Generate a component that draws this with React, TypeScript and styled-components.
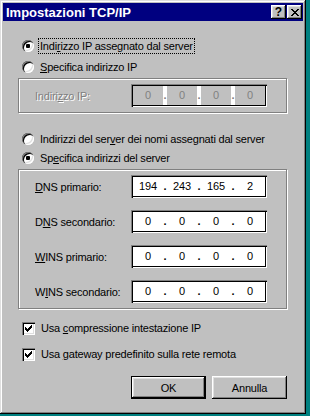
import React from 'react'
import styled, { createGlobalStyle } from 'styled-components'

const GlobalStyle = createGlobalStyle`
  body {
    margin: 0;
    background: #008080;
    font-family: "Liberation Sans", Arial, sans-serif;
    font-size: 11px;
    letter-spacing: -0.2px;
    color: #000;
  }
`

const Window = styled.div`
  width: 306px;
  height: 414px;
  box-sizing: border-box;
  padding: 3px;
  background: #c0c0c0;
  box-shadow: inset -1px -1px #000, inset 1px 1px #dfdfdf,
    inset -2px -2px #808080, inset 2px 2px #fff;
  display: flex;
  flex-direction: column;
`

const TitleBar = styled.div`
  height: 18px;
  background: #000080;
  display: flex;
  align-items: center;
  padding: 0 1px 0 3px;
  color: #fff;
  font-weight: bold;
  font-size: 13px;
  letter-spacing: 0;
`

const TitleButtons = styled.div`
  margin-left: auto;
  display: flex;
  gap: 1px;
`

const TitleButton = styled.div`
  width: 15px;
  height: 14px;
  box-sizing: border-box;
  background: #c0c0c0;
  color: #000;
  display: flex;
  align-items: center;
  justify-content: center;
  font-size: 12px;
  font-weight: bold;
  box-shadow: inset -1px -1px #000, inset 1px 1px #fff,
    inset -2px -2px #808080, inset 2px 2px #dfdfdf;
`

const Body = styled.div`
  display: flex;
  flex-direction: column;
  padding: 17px 16px 0 15px;
`

const OptionRow = styled.label<{ $top: number }>`
  display: flex;
  align-items: center;
  height: 16px;
  margin-top: ${p => p.$top}px;
  padding-left: 4px;
  gap: 5px;
`

const Radio = styled.span<{ $checked?: boolean }>`
  position: relative;
  width: 12px;
  height: 12px;
  flex: none;
  border-radius: 50%;
  background: #fff;
  box-shadow: inset 1px 1px 0 #808080, inset 2px 2px 0 #000,
    inset -1px -1px 0 #fff, inset -2px -2px 0 #dfdfdf;
  &::after {
    content: '';
    display: ${p => (p.$checked ? 'block' : 'none')};
    position: absolute;
    left: 4px;
    top: 4px;
    width: 4px;
    height: 4px;
    border-radius: 1px;
    background: #000;
  }
`

const Check = styled.span`
  width: 13px;
  height: 13px;
  flex: none;
  background: #fff;
  box-shadow: inset 1px 1px 0 #808080, inset 2px 2px 0 #000,
    inset -1px -1px 0 #fff, inset -2px -2px 0 #dfdfdf;
  display: flex;
  align-items: center;
  justify-content: center;
`

const Caption = styled.span<{ $focused?: boolean }>`
  padding: 1px 1px;
  outline: ${p => (p.$focused ? '1px dotted #000' : 'none')};
  white-space: nowrap;
`

const Group = styled.div<{ $top: number }>`
  margin-top: ${p => p.$top}px;
  border: 1px solid #808080;
  box-shadow: 1px 1px 0 #fff, inset 1px 1px 0 #fff;
  display: flex;
  flex-direction: column;
  gap: 12px;
  padding: 5px 0 5px 16px;
`

const FieldRow = styled.div`
  display: flex;
  align-items: center;
`

const FieldLabel = styled.span<{ $disabled?: boolean }>`
  width: 96px;
  flex: none;
  color: ${p => (p.$disabled ? '#808080' : '#000')};
  text-shadow: ${p => (p.$disabled ? '1px 1px 0 #fff' : 'none')};
`

const IpBox = styled.div`
  width: 136px;
  height: 23px;
  box-sizing: border-box;
  padding: 2px;
  background: #fff;
  box-shadow: inset 1px 1px 0 #808080, inset 2px 2px 0 #000,
    inset -1px -1px 0 #fff, inset -2px -2px 0 #000;
  display: flex;
`

const Octet = styled.span<{ $disabled?: boolean }>`
  width: 30px;
  flex: none;
  display: flex;
  align-items: center;
  justify-content: center;
  padding-bottom: 2px;
  box-sizing: border-box;
  background: ${p => (p.$disabled ? '#c0c0c0' : '#fff')};
  color: ${p => (p.$disabled ? '#808080' : '#000')};
`

const Dot = styled.span<{ $disabled?: boolean }>`
  width: 4px;
  flex: none;
  display: flex;
  align-items: center;
  justify-content: center;
  padding-bottom: 2px;
  font-weight: bold;
  color: ${p => (p.$disabled ? '#808080' : '#000')};
`

const Footer = styled.div`
  display: flex;
  justify-content: flex-end;
  gap: 6px;
  margin-top: 14px;
`

const Button = styled.div<{ $default?: boolean }>`
  width: 75px;
  height: 23px;
  box-sizing: border-box;
  background: #c0c0c0;
  display: flex;
  align-items: center;
  justify-content: center;
  border: ${p => (p.$default ? '1px solid #000' : 'none')};
  box-shadow: inset -1px -1px #000, inset 1px 1px #fff,
    inset -2px -2px #808080, inset 2px 2px #dfdfdf;
`

const CheckMark = () => (
  <svg width="7" height="7" viewBox="0 0 7 7" shapeRendering="crispEdges">
    <path
      d="M0 2h1v3h-1zM1 3h1v3h-1zM2 4h1v3h-1zM3 3h1v3h-1zM4 2h1v3h-1zM5 1h1v3h-1zM6 0h1v3h-1z"
      fill="#000"
    />
  </svg>
)

const CloseGlyph = () => (
  <svg width="8" height="7" viewBox="0 0 8 7" shapeRendering="crispEdges">
    <path
      d="M0 0h2v1h-2zM6 0h2v1h-2zM1 1h2v1h-2zM5 1h2v1h-2zM2 2h4v1h-4zM3 3h2v1h-2zM2 4h4v1h-4zM1 5h2v1h-2zM5 5h2v1h-2zM0 6h2v1h-2zM6 6h2v1h-2z"
      fill="#000"
    />
  </svg>
)

const IpField: React.FC<{ value: string[]; disabled?: boolean }> = ({ value, disabled }) => (
  <IpBox>
    {value.map((v, i) => (
      <React.Fragment key={i}>
        {i > 0 && <Dot $disabled={disabled}>.</Dot>}
        <Octet $disabled={disabled}>{v}</Octet>
      </React.Fragment>
    ))}
  </IpBox>
)

const servers = [
  { label: <><u>D</u>NS primario:</>, value: ['194', '243', '165', '2'] },
  { label: <>D<u>N</u>S secondario:</>, value: ['0', '0', '0', '0'] },
  { label: <><u>W</u>INS primario:</>, value: ['0', '0', '0', '0'] },
  { label: <>W<u>I</u>NS secondario:</>, value: ['0', '0', '0', '0'] },
]

export default function App() {
  return (
    <>
      <GlobalStyle />
      <Window>
        <TitleBar>
          Impostazioni TCP/IP
          <TitleButtons>
            <TitleButton>?</TitleButton>
            <TitleButton><CloseGlyph /></TitleButton>
          </TitleButtons>
        </TitleBar>
        <Body>
          <OptionRow $top={0}>
            <Radio $checked />
            <Caption $focused>Indi<u>r</u>izzo IP assegnato dal server</Caption>
          </OptionRow>
          <OptionRow $top={5}>
            <Radio />
            <Caption><u>S</u>pecifica indirizzo IP</Caption>
          </OptionRow>
          <Group $top={3}>
            <FieldRow>
              <FieldLabel $disabled>Indiri<u>z</u>zo IP:</FieldLabel>
              <IpField value={['0', '0', '0', '0']} disabled />
            </FieldRow>
          </Group>
          <OptionRow $top={18}>
            <Radio />
            <Caption>Indirizzi del ser<u>v</u>er dei nomi assegnati dal server</Caption>
          </OptionRow>
          <OptionRow $top={3}>
            <Radio $checked />
            <Caption>Sp<u>e</u>cifica indirizzi del server</Caption>
          </OptionRow>
          <Group $top={3}>
            {servers.map((s, i) => (
              <FieldRow key={i}>
                <FieldLabel>{s.label}</FieldLabel>
                <IpField value={s.value} />
              </FieldRow>
            ))}
          </Group>
          <OptionRow $top={11}>
            <Check><CheckMark /></Check>
            <Caption>Usa <u>c</u>ompressione intestazione IP</Caption>
          </OptionRow>
          <OptionRow $top={10}>
            <Check><CheckMark /></Check>
            <Caption>Usa <u>g</u>ateway predefinito sulla rete remota</Caption>
          </OptionRow>
          <Footer>
            <Button $default>OK</Button>
            <Button>Annulla</Button>
          </Footer>
        </Body>
      </Window>
    </>
  )
}
